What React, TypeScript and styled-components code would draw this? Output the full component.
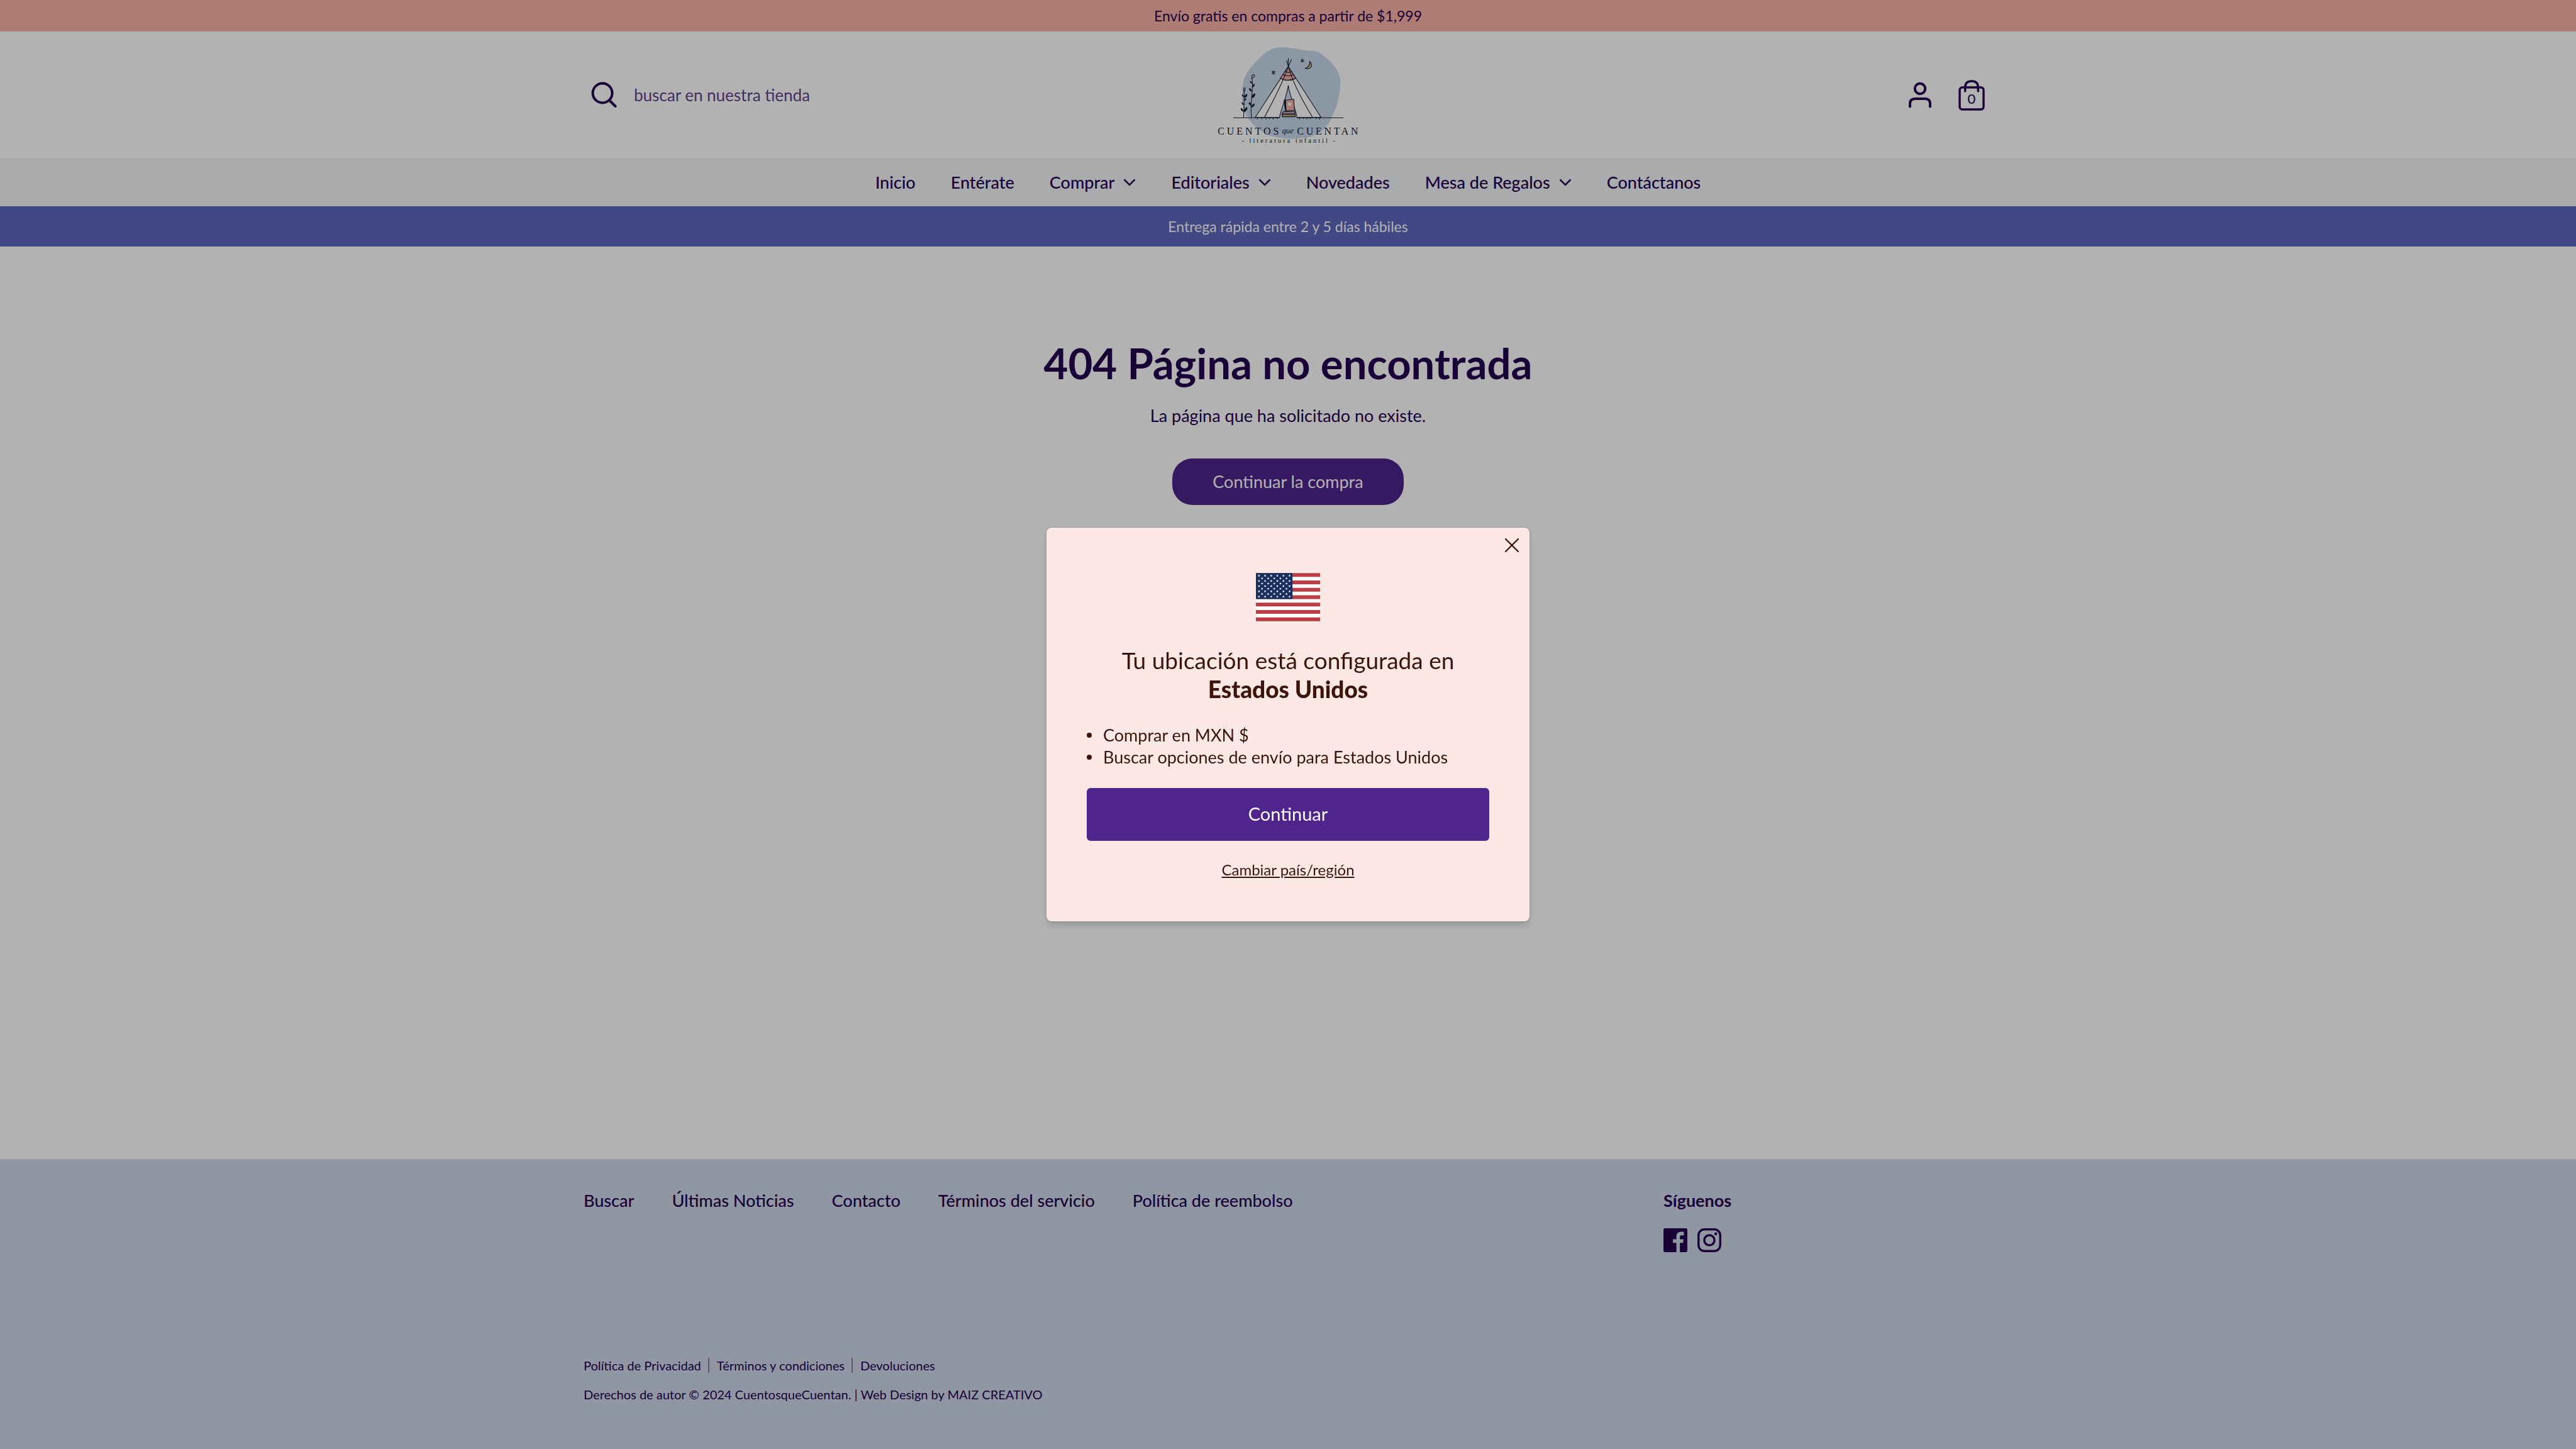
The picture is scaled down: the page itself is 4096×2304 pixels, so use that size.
import React from 'react';
import styled, { createGlobalStyle } from 'styled-components';

const ink = '#250050';
const purple = '#4f248c';
const cocoa = '#3d1409';

const GlobalStyle = createGlobalStyle`
  *, *::before, *::after { box-sizing: border-box; }
  body {
    margin: 0;
    background: #fff;
    color: ${ink};
    font-family: Lato, "Noto Sans", sans-serif;
    font-size: 27px;
    line-height: 40px;
  }
  a { color: inherit; text-decoration: none; }
  button, input { font: inherit; }
  h1, h2, p, ul { margin: 0; padding: 0; }
  ul { list-style: none; }
  svg { display: block; }
`;

const Page = styled.div`
  display: flex;
  flex-direction: column;
  min-height: 100vh;
`;

const Container = styled.div`
  width: 100%;
  max-width: 2240px;
  margin: 0 auto;
`;

const Strip = styled.div<{ $bg: string; $fg: string; $pad: number }>`
  padding: ${(p) => p.$pad}px 24px;
  background: ${(p) => p.$bg};
  color: ${(p) => p.$fg};
  font-size: 23px;
  line-height: 32px;
  text-align: center;
`;

const HeaderRow = styled(Container)`
  display: grid;
  grid-template-columns: 1fr auto 1fr;
  align-items: center;
  padding: 22px 12px;
`;

const SearchForm = styled.form`
  display: flex;
  align-items: center;
  gap: 26px;
`;

const IconButton = styled.button`
  display: block;
  padding: 0;
  border: 0;
  background: none;
  color: inherit;
  cursor: pointer;
`;

const SearchInput = styled.input`
  flex: 1;
  max-width: 480px;
  padding: 0;
  border: 0;
  outline: 0;
  background: none;
  color: ${ink};
  font-size: 26px;
  line-height: 40px;
  &::placeholder { color: #63428c; opacity: 1; }
`;

const HeaderTools = styled.div`
  display: flex;
  align-items: center;
  justify-content: flex-end;
  gap: 42px;
`;

const CartLink = styled.a`
  display: grid;
  place-items: center;
  > * { grid-area: 1 / 1; }
`;

const CartCount = styled.span`
  padding-top: 13px;
  font-size: 22px;
  line-height: 24px;
`;

const NavBar = styled.nav`
  padding: 19px 24px 18px;
  background: #f3f5f7;
`;

const NavList = styled.ul`
  display: flex;
  flex-wrap: wrap;
  justify-content: center;
  gap: 0 56px;
`;

const NavLink = styled.a`
  display: flex;
  align-items: center;
  gap: 14px;
  font-weight: 500;
`;

const Main = styled.main`
  display: flex;
  flex: 1;
  flex-direction: column;
  align-items: center;
  padding: 145px 24px;
`;

const Title = styled.h1`
  margin-bottom: 24px;
  font-size: 67px;
  font-weight: 700;
  line-height: 80px;
`;

const PillLink = styled.a`
  margin-top: 48px;
  padding: 17px 64px;
  border-radius: 32px;
  background: ${purple};
  color: #fff;
`;

const Footer = styled.footer`
  padding: 46px 24px 75px;
  background: #cfd8e9;
`;

const FooterTop = styled.div`
  display: grid;
  grid-template-columns: 1fr 523px;
  margin-bottom: 168px;
`;

const FooterLinks = styled.ul`
  display: flex;
  flex-wrap: wrap;
  gap: 0 60px;
  font-weight: 500;
`;

const SocialTitle = styled.h2`
  margin: 0 0 24px;
  font-size: 27px;
  font-weight: 700;
  line-height: 40px;
`;

const SocialList = styled.ul`
  display: flex;
  gap: 16px;
`;

const LegalList = styled.ul`
  display: flex;
  margin-bottom: 22px;
  font-size: 20px;
  line-height: 24px;
`;

const LegalItem = styled.li`
  & + & {
    margin-left: 11px;
    padding-left: 12px;
    border-left: 2px solid #8878a8;
  }
`;

const Copyright = styled.p`
  font-size: 20px;
  line-height: 24px;
`;

const Backdrop = styled.div`
  position: fixed;
  inset: 0;
  display: flex;
  align-items: center;
  justify-content: center;
  background: rgba(0, 0, 0, 0.3);
`;

const Dialog = styled.section`
  position: relative;
  display: flex;
  flex-direction: column;
  align-items: center;
  width: 768px;
  padding: 72px 64px 66px;
  border-radius: 8px;
  background: #fce9e6;
  box-shadow: 0 0 3px rgba(0, 0, 0, 0.3), 0 8px 10px rgba(0, 0, 0, 0.12);
  color: ${cocoa};
`;

const CloseButton = styled(IconButton)`
  position: absolute;
  top: 16px;
  right: 16px;
`;

const DialogTitle = styled.h2`
  margin: 39px 0 32px;
  font-size: 37px;
  font-weight: 400;
  line-height: 46px;
  text-align: center;
`;

const Country = styled.strong`
  display: block;
  font-weight: 900;
`;

const Perks = styled.ul`
  align-self: stretch;
  margin-bottom: 32px;
  line-height: 35px;
`;

const Perk = styled.li`
  display: flex;
  align-items: center;
  gap: 18px;
  &::before {
    content: "";
    width: 8px;
    height: 8px;
    border-radius: 50%;
    background: ${cocoa};
  }
`;

const PrimaryButton = styled.button`
  align-self: stretch;
  margin-bottom: 30px;
  padding: 21px 24px 23px;
  border: 0;
  border-radius: 6px;
  background: ${purple};
  color: #fff;
  font-size: 29px;
  line-height: 40px;
  cursor: pointer;
`;

const TextButton = styled(IconButton)`
  font-size: 24px;
  line-height: 32px;
  text-decoration: underline;
`;

const SearchIcon = () => (
  <svg width="42" height="42" viewBox="0 0 42 42" fill="none" stroke="currentColor" strokeWidth="4" strokeLinecap="round">
    <circle cx="18" cy="18" r="15.5" />
    <path d="M29 29.5 38.5 39" />
  </svg>
);

const UserIcon = () => (
  <svg width="38" height="42" viewBox="0 0 38 42" fill="none" stroke="currentColor" strokeWidth="4" strokeLinecap="round">
    <circle cx="19" cy="11" r="8.2" />
    <path d="M3 39.500v-4.500q0-8 8-8h16q8 0 8 8v4.500" />
  </svg>
);

const BagIcon = () => (
  <svg width="42" height="50" viewBox="0 0 42 50" fill="none" stroke="currentColor" strokeWidth="3.400" strokeLinecap="round">
    <rect x="2" y="13" width="38" height="35" rx="4" />
    <path d="M10.700 19V13q0-10 10.300-10t10.300 10v6" />
  </svg>
);

const Chevron = () => (
  <svg width="20" height="12" viewBox="0 0 20 12" fill="none" stroke="currentColor" strokeWidth="2.600">
    <path d="M1.500 1.500 10 10l8.500-8.500" />
  </svg>
);

const CloseIcon = () => (
  <svg width="24" height="24" viewBox="0 0 24 24" fill="none" stroke="currentColor" strokeWidth="2.400" strokeLinecap="round">
    <path d="M2 2 22 22M22 2 2 22" />
  </svg>
);

const FacebookIcon = () => (
  <svg width="38" height="38" viewBox="0 0 48 48" fill="currentColor">
    <path d="M3 0H45a3 3 0 0 1 3 3V45a3 3 0 0 1-3 3H33V29.300h6.400l.8-7.200H33v-4.500c0-2.200.7-3.500 3.500-3.500H41V7.400c-1-.2-3-.4-5-.4-6 0-10 3.500-10 9.800v5.300h-7v7.200h7V48H3a3 3 0 0 1-3-3V3a3 3 0 0 1 3-3Z" />
  </svg>
);

const InstagramIcon = () => (
  <svg width="38" height="38" viewBox="0 0 48 48" fill="none" stroke="currentColor" strokeWidth="4.300">
    <rect x="2.200" y="2.200" width="43.600" height="43.600" rx="12" />
    <circle cx="24" cy="24" r="10.200" />
    <circle cx="36.800" cy="11.200" r="2.900" fill="currentColor" stroke="none" />
  </svg>
);

const starRows = Array.from({ length: 9 }, (_, row) => ({
  y: 5.200 + row * 5.200,
  xs: Array.from({ length: row % 2 ? 5 : 6 }, (_, i) => 6.100 + (row % 2 ? 6.100 : 0) + i * 12.200),
}));

const star = 'M0-2.600.7-.8 2.500-.8 1.100.4 1.600 2.200 0 1.100-1.600 2.200-1.100.4-2.500-.8-.7-.8Z';

const FlagIcon = () => (
  <svg width="102" height="77" viewBox="0 0 128 96" role="img" aria-label="Estados Unidos">
    <path fill="#fff" d="M0 0h128v96H0z" />
    {[0, 1, 2, 3, 4, 5, 6].map((i) => (
      <path key={i} fill="#bd3d44" d={`M0 ${(i * 2 * 96) / 13}h128v${96 / 13}H0z`} />
    ))}
    <path fill="#192f5d" d="M0 0h73v51.700H0z" />
    {starRows.map(({ y, xs }) => xs.map((x) => (
      <path key={`${x}-${y}`} fill="#fff" d={star} transform={`translate(${x} ${y})`} />
    )))}
  </svg>
);

const LogoLetters = styled.text<{ $size: number; $track: number }>`
  fill: #141b2b;
  font-family: "Liberation Serif", serif;
  font-size: ${(p) => p.$size}px;
  letter-spacing: ${(p) => p.$track}px;
`;

const LogoScript = styled.text`
  fill: #141b2b;
  font-family: "Liberation Serif", serif;
  font-size: 48px;
  font-style: italic;
`;

const leaf = 'M0 0C-2-8 3-18 17-25C20-12 12-2 0 0Z';

const leaves: [number, number, number, number][] = [
  [277, 374, 1, 1], [275, 370, -1, 0.7], [277, 392, 1, 0.7], [274, 418, -1, 0.7], [274, 458, 1, 1.2], [272, 456, -1, 0.9],
  [323, 290, -1, 0.7], [323, 312, 1, 0.9], [322, 337, -1, 0.9], [321, 376, 1, 1.2], [320, 422, -1, 0.9], [320, 432, 1, 1],
];

const Logo = () => (
  <svg width="229" height="157" viewBox="110 60 860 590" role="img" aria-label="Cuentos que Cuentan, literatura infantil">
    <path fill="#c7d8ed" d="M500 72C560 72 620 91 688 93C715 96 745 115 775 142C825 187 851 232 851 282C850 360 830 430 800 492C775 545 730 600 640 612C570 622 500 620 430 600C370 580 310 520 285 470C262 425 262 380 265 330C268 250 295 215 345 160C395 105 440 72 500 72Z" />
    <g fill="none" stroke="#141b2b" strokeWidth="4" strokeLinecap="round" strokeLinejoin="round">
      <path fill="#fff" d="M540 187 343 490l144 1C500 430 530 370 540 300c8 65 42 130 52 191l144 0Z" />
      <path fill="#f7aea6" d="M540 187 491 258q50 23 93 0Z" />
      <path d="M508 236q32 14 63 0M520 216q20 12 40 0" />
      <path strokeWidth="2.500" d="M502 262v-6M512 266v-6M522 268v-6M532 269v-6M542 269v-6M552 268v-6M562 266v-6M572 263v-6" />
      <path d="M540 187Q500 300 398 489M540 187Q570 300 684 489M540 138v50M530 151l10 37 18-43" />
      <path d="M212 493H487M592 493H868" />
      <path d="M355 493v8M382 493v7M407 493v8M427 493v6M449 493v8M475 493v6M608 493v8M630 493v6M650 493v8M671 493v6M706 493v6M727 493v9" />
      <path fill="#f7aea6" d="M522 388l50-6 5 66-51 5Z" />
      <path fill="#141b2b" d="M515 388l8 0 4 64-5-2Z" />
      <path fill="#fff" d="M510 456h70v10h-74Z" />
      <path fill="#f7aea6" d="M503 466h76v8h-76Z" />
      <path fill="#dcba79" d="M505 475h76v12h-78Z" />
      <path fill="#dcba79" d="M668 156c22 25 8 50-28 42 22-6 30-20 28-42Z" />
      <path d="M451 211v24M442 217l18 12M460 217l-18 12M624 142v19M616 147l16 10M632 147l-16 10" />
      <path d="M273 490q4-70 3-155M276 335c-10-20 8-30 6-10q-2 8-6 10M320 490q-6-60 2-130t0-107M322 255c-4-22 22-26 15-8q-5 8-15 8" />
    </g>
    {leaves.map(([x, y, dir, size]) => (
      <path key={`${x}-${y}-${dir}`} fill="#141b2b" d={leaf} transform={`translate(${x} ${y}) scale(${dir * size} ${size})`} />
    ))}
    <path fill="#fff" d="M548 424c-16-10-12-20-6-20q5 0 6 5 2-6 7-6c7 0 7 12-7 21Z" />
    <LogoLetters x="118" y="592" $size={60} $track={15}>CUENTOS</LogoLetters>
    <LogoScript x="502" y="585">que</LogoScript>
    <LogoLetters x="592" y="592" $size={60} $track={14}>CUENTAN</LogoLetters>
    <LogoLetters x="262" y="642" $size={40} $track={11}>- literatura infantil -</LogoLetters>
  </svg>
);

const navItems = [
  { label: 'Inicio' },
  { label: 'Entérate' },
  { label: 'Comprar', menu: true },
  { label: 'Editoriales', menu: true },
  { label: 'Novedades' },
  { label: 'Mesa de Regalos', menu: true },
  { label: 'Contáctanos' },
];

const footerItems = ['Buscar', 'Últimas Noticias', 'Contacto', 'Términos del servicio', 'Política de reembolso'];
const legalItems = ['Política de Privacidad', 'Términos y condiciones', 'Devoluciones'];

export default function App() {
  return (
    <>
      <GlobalStyle />
      <Page>
        <Strip $bg="#fbb2a8" $fg={ink} $pad={9}>Envío gratis en compras a partir de $1,999</Strip>
        <header>
          <HeaderRow>
            <SearchForm role="search">
              <IconButton type="submit" aria-label="Buscar"><SearchIcon /></IconButton>
              <SearchInput type="search" aria-label="buscar en nuestra tienda" placeholder="buscar en nuestra tienda" />
            </SearchForm>
            <a href="#inicio"><Logo /></a>
            <HeaderTools>
              <a href="#cuenta" aria-label="Cuenta"><UserIcon /></a>
              <CartLink href="#carrito" aria-label="Carrito">
                <BagIcon />
                <CartCount>0</CartCount>
              </CartLink>
            </HeaderTools>
          </HeaderRow>
          <NavBar>
            <NavList>
              {navItems.map(({ label, menu }) => (
                <li key={label}>
                  <NavLink href="#menu">{label}{menu && <Chevron />}</NavLink>
                </li>
              ))}
            </NavList>
          </NavBar>
          <Strip $bg="#5d67be" $fg="#fff" $pad={16}>Entrega rápida entre 2 y 5 días hábiles</Strip>
        </header>
        <Main>
          <Title>404 Página no encontrada</Title>
          <p>La página que ha solicitado no existe.</p>
          <PillLink href="#tienda">Continuar la compra</PillLink>
        </Main>
        <Footer>
          <Container>
            <FooterTop>
              <FooterLinks>
                {footerItems.map((label) => <li key={label}><a href="#pie">{label}</a></li>)}
              </FooterLinks>
              <div>
                <SocialTitle>Síguenos</SocialTitle>
                <SocialList>
                  <li><a href="#facebook" aria-label="Facebook"><FacebookIcon /></a></li>
                  <li><a href="#instagram" aria-label="Instagram"><InstagramIcon /></a></li>
                </SocialList>
              </div>
            </FooterTop>
            <LegalList>
              {legalItems.map((label) => <LegalItem key={label}><a href="#legal">{label}</a></LegalItem>)}
            </LegalList>
            <Copyright>
              Derechos de autor © 2024 CuentosqueCuentan. | <a href="#maiz">Web Design by MAIZ CREATIVO</a>
            </Copyright>
          </Container>
        </Footer>
      </Page>
      <Backdrop>
        <Dialog role="dialog" aria-modal="true" aria-labelledby="location-title">
          <CloseButton type="button" aria-label="Cerrar"><CloseIcon /></CloseButton>
          <FlagIcon />
          <DialogTitle id="location-title">
            Tu ubicación está configurada en <Country>Estados Unidos</Country>
          </DialogTitle>
          <Perks>
            <Perk>Comprar en MXN $</Perk>
            <Perk>Buscar opciones de envío para Estados Unidos</Perk>
          </Perks>
          <PrimaryButton type="button">Continuar</PrimaryButton>
          <TextButton type="button">Cambiar país/región</TextButton>
        </Dialog>
      </Backdrop>
    </>
  );
}
